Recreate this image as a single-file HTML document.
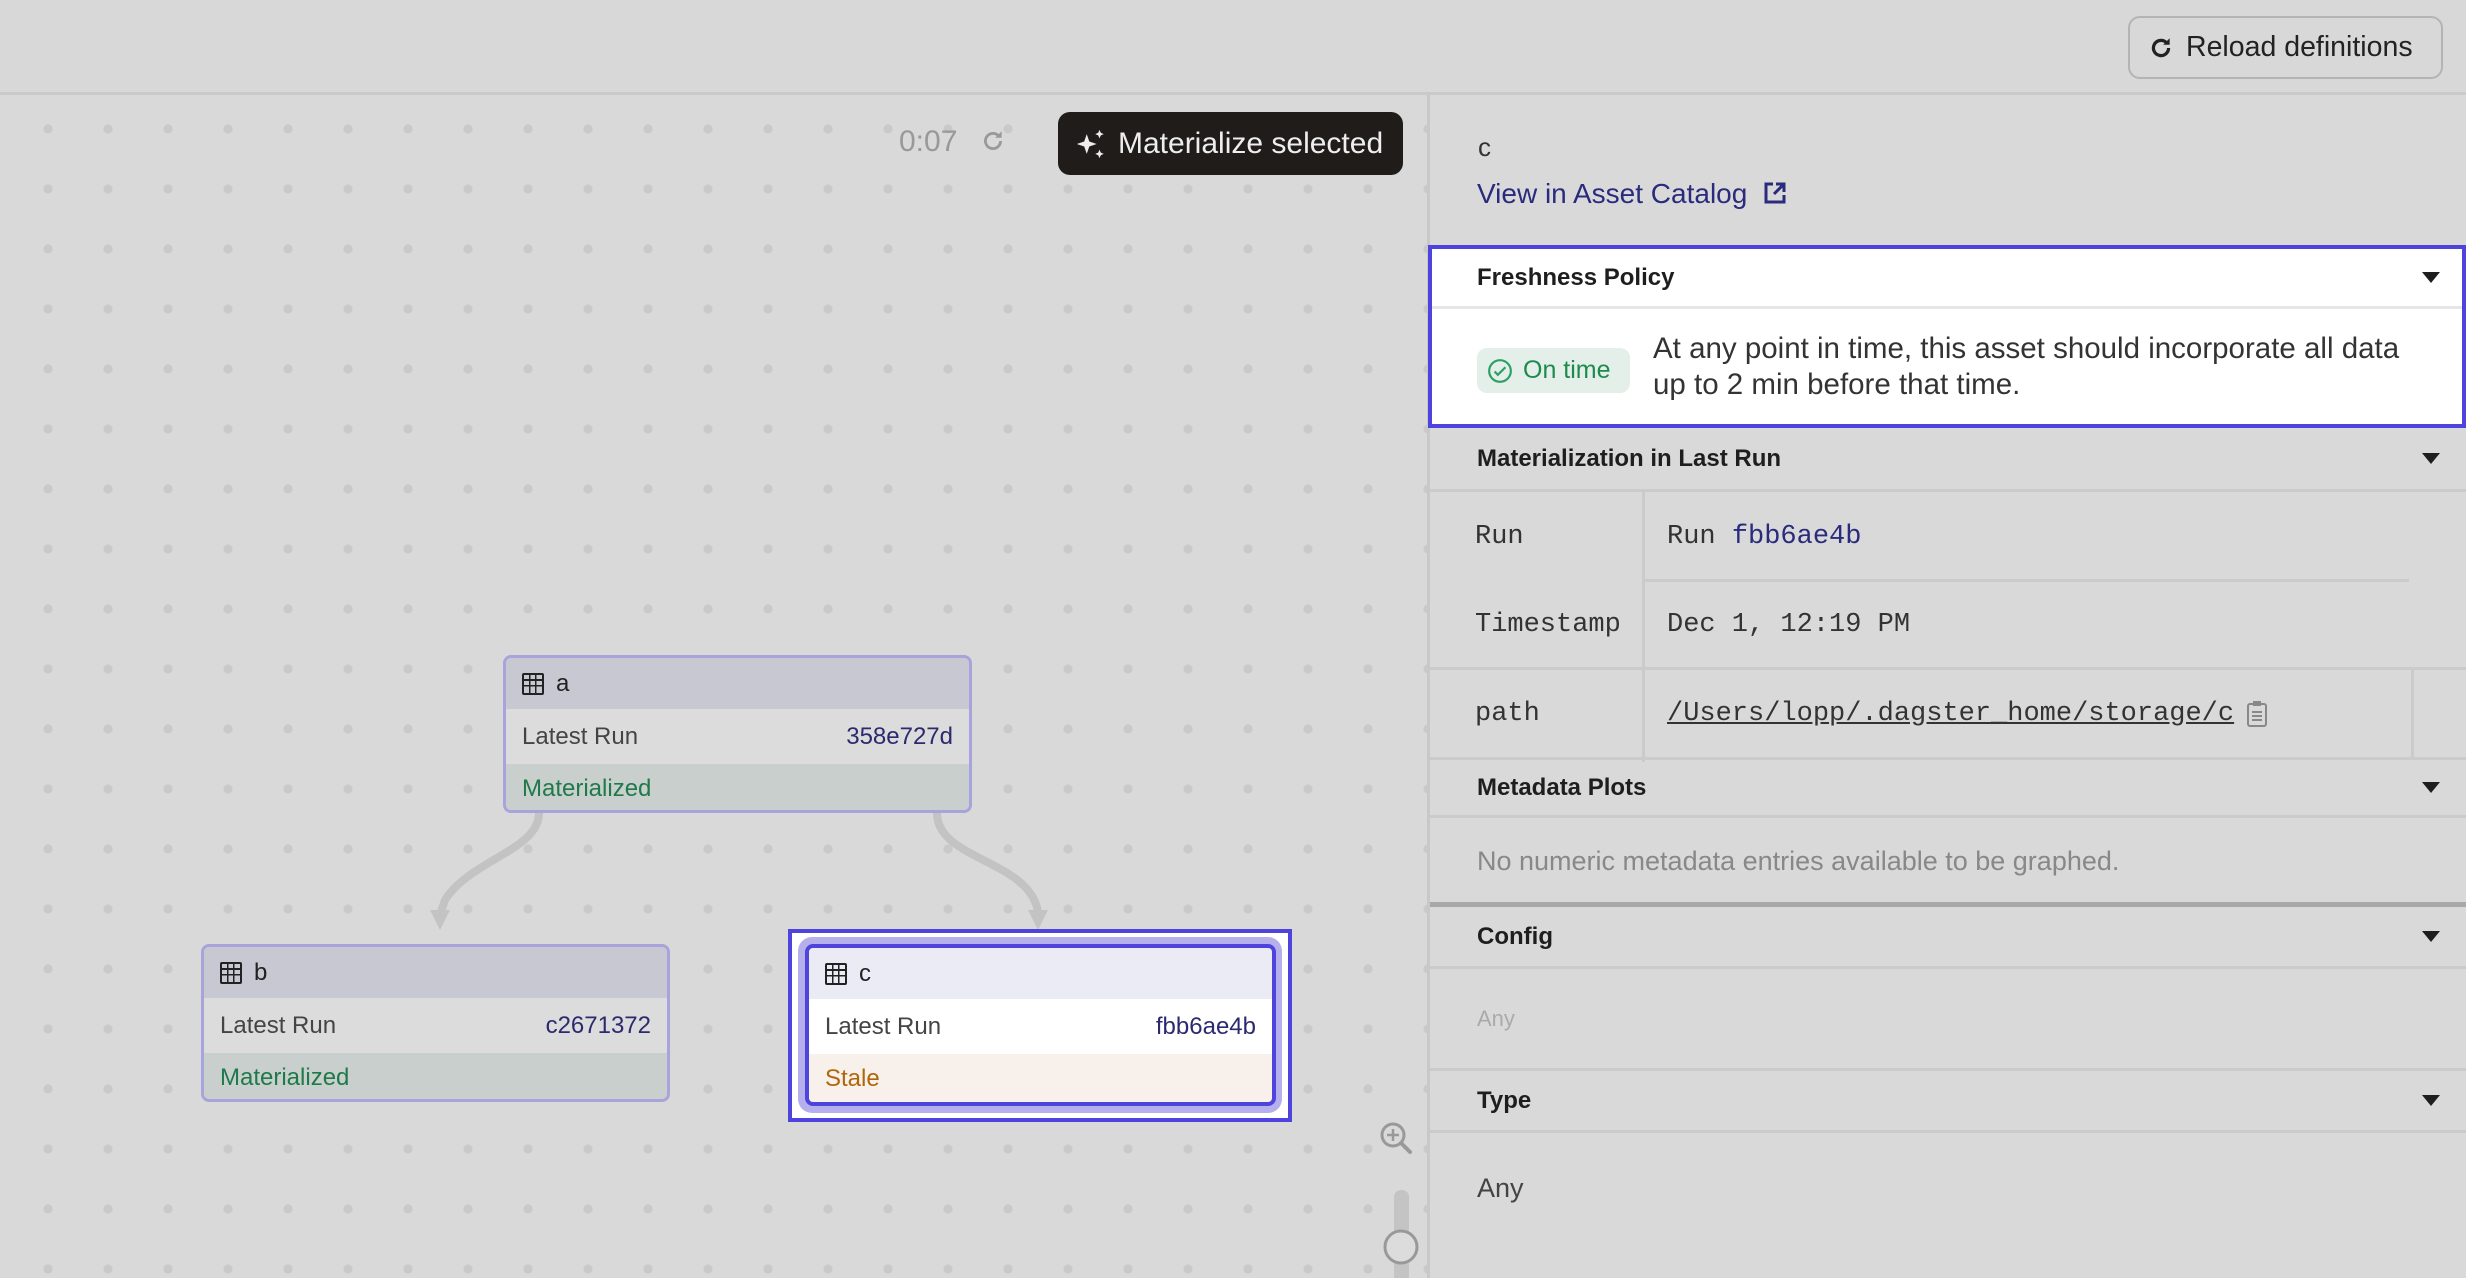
<!DOCTYPE html>
<html><head><meta charset="utf-8"><style>
*{box-sizing:border-box;margin:0;padding:0}
body{width:2466px;height:1278px;overflow:hidden;background:#d9d9d9;font-family:"Liberation Sans",sans-serif;position:relative;color:#222}
.abs{position:absolute}
#top{left:0;top:0;width:2466px;height:95px;background:#d8d8d8;border-bottom:3px solid #cacaca}
#canvas{left:0;top:95px;width:1427px;height:1183px;background-color:#d9d9d9;background-image:radial-gradient(circle,#c9c9c9 4px,transparent 5px);background-size:60px 60px;background-position:18px 4px}
#divider{left:1427px;top:95px;width:3px;height:1183px;background:#c8c8c8}
.node{position:absolute;width:469px;height:158px;border:3px solid #a9a3dc;border-radius:8px;overflow:hidden;font-size:24px}
.node .h{height:51px;background:#c8c8d2;display:flex;align-items:center;padding-left:16px;color:#222}
.node .r{height:55px;background:#dcdcdc;display:flex;align-items:center;justify-content:space-between;padding:0 16px;color:#444}
.node .r span:last-child{color:#2c2a6e}
.node .s{height:50px;background:#c9cfcc;display:flex;align-items:center;padding-left:16px;color:#1f7a4a}
.tbl{display:inline-block;width:22px;height:22px;border:2.5px solid #222;border-radius:2px;margin-right:12px;background:
linear-gradient(#222,#222) 0 4px/100% 2px no-repeat,
linear-gradient(#222,#222) 0 10px/100% 1.5px no-repeat,
linear-gradient(#222,#222) 5px 0/1.5px 100% no-repeat,
linear-gradient(#222,#222) 11px 0/1.5px 100% no-repeat}
.sec{position:absolute;left:1430px;width:1036px;border-bottom:3px solid #cbcbcb;font-weight:bold;font-size:24px;color:#1e1e1e;padding-left:47px;display:flex;align-items:center}
.tri{position:absolute;right:26px;width:0;height:0;border-left:9px solid transparent;border-right:9px solid transparent;border-top:11px solid #1e1e1e}
.mono{font-family:"Liberation Mono",monospace}
.row{position:absolute;left:1430px;width:1036px;display:flex;align-items:center;font-size:27px;color:#333}
</style></head><body>
<div id="top" class="abs"></div>
<div class="abs" style="left:2128px;top:16px;width:315px;height:63px;border:2px solid #b4b4b4;border-radius:12px;display:flex;align-items:center;padding-left:18px;font-size:28.5px;color:#222">
<svg width="26" height="26" viewBox="0 0 24 24" style="margin-right:12px"><path d="M19 12a7 7 0 1 1-2.2-5.1" fill="none" stroke="#222" stroke-width="3"/><path d="M20 3v6h-6z" fill="#222"/></svg>Reload definitions</div>
<div id="canvas" class="abs"></div>
<div id="divider" class="abs"></div>

<div class="abs" style="left:899px;top:125px;font-size:30px;color:#999">0:07</div>
<svg class="abs" style="left:980px;top:128px" width="26" height="26" viewBox="0 0 24 24"><path d="M19 12a7 7 0 1 1-2.2-5.1" fill="none" stroke="#999" stroke-width="2.6"/><path d="M20 3v6h-6z" fill="#999"/></svg>
<div class="abs" style="left:1058px;top:112px;width:345px;height:63px;background:#1f1c1a;border-radius:12px;color:#eee;font-size:30px;display:flex;align-items:center;padding-left:16px">
<svg width="34" height="34" viewBox="0 0 24 24" style="margin-right:10px"><path d="M9 5l1.8 5.2L16 12l-5.2 1.8L9 19l-1.8-5.2L2 12l5.2-1.8z" fill="#eee"/><path d="M18 2l.9 2.1L21 5l-2.1.9L18 8l-.9-2.1L15 5l2.1-.9z" fill="#eee"/><path d="M18 16l.9 2.1L21 19l-2.1.9L18 22l-.9-2.1L15 19l2.1-.9z" fill="#eee"/></svg>Materialize selected</div>

<svg class="abs" style="left:0;top:0" width="1427" height="1278">
<path d="M539 813 C539 850 470 860 445 900 L440 915" fill="none" stroke="#c3c3c3" stroke-width="8"/>
<path d="M430 910 L440 930 L450 910 Z" fill="#c3c3c3"/>
<path d="M937 813 C937 860 1030 860 1038 912" fill="none" stroke="#c3c3c3" stroke-width="8"/>
<path d="M1028 910 L1038 930 L1048 910 Z" fill="#c3c3c3"/>
<circle cx="1393" cy="1135" r="11" fill="none" stroke="#999" stroke-width="3"/>
<path d="M1401 1143 L1410 1152" stroke="#999" stroke-width="4" stroke-linecap="round"/>
<path d="M1393 1129v12M1387 1135h12" stroke="#999" stroke-width="2.5"/>
<rect x="1394" y="1190" width="15" height="100" rx="7" fill="#c4c4c4"/>
<circle cx="1401" cy="1247" r="16" fill="#dcdcdc" stroke="#999" stroke-width="3"/>
</svg>

<div class="node" style="left:503px;top:655px"><div class="h"><i class="tbl"></i>a</div><div class="r"><span>Latest Run</span><span>358e727d</span></div><div class="s">Materialized</div></div>
<div class="node" style="left:201px;top:944px"><div class="h"><i class="tbl"></i>b</div><div class="r"><span>Latest Run</span><span>c2671372</span></div><div class="s">Materialized</div></div>
<div class="abs" style="left:788px;top:929px;width:504px;height:193px;border:4px solid #4f43dd;background:#fff"></div>
<div class="abs" style="left:798px;top:937px;width:484px;height:176px;border-radius:14px;background:#b5b0ec"></div>
<div class="node" style="left:805px;top:944px;height:162px;width:471px;border:4px solid #4f43dd"><div class="h" style="background:#ebebf6">
<i class="tbl"></i>c</div><div class="r" style="background:#fff"><span>Latest Run</span><span>fbb6ae4b</span></div><div class="s" style="background:#f8f0ea;color:#b0660a">Stale</div></div>

<div class="abs" style="left:1478px;top:132px;font-size:26px;color:#333">c</div>
<div class="abs" style="left:1477px;top:178px;font-size:28px;color:#2a2b7c">View in Asset Catalog
<svg width="24" height="24" viewBox="0 0 24 24" style="margin-left:8px;vertical-align:-2px"><path d="M10 3H3v18h18v-7" fill="none" stroke="#2a2b7c" stroke-width="3"/><path d="M13 3h8v8M21 3L11 13" fill="none" stroke="#2a2b7c" stroke-width="3"/></svg></div>

<div class="abs" style="left:1428px;top:245px;width:1038px;height:183px;border:4px solid #4f43dd;background:#fff">
<div style="height:60px;border-bottom:3px solid #e6e6e6;display:flex;align-items:center;padding-left:45px;font-weight:bold;font-size:24px;color:#1e1e1e;position:relative">Freshness Policy<div class="tri" style="right:22px"></div></div>
<div style="position:absolute;left:45px;top:99px;width:153px;height:45px;background:#e3efe8;border-radius:10px;display:flex;align-items:center;padding-left:10px;font-size:25px;color:#1d8a4e">
<svg width="26" height="26" viewBox="0 0 24 24" style="margin-right:10px"><circle cx="12" cy="12" r="10" fill="none" stroke="#2aa065" stroke-width="2"/><path d="M7 12.5l3 3 7-7" fill="none" stroke="#2aa065" stroke-width="2"/></svg>On time</div>
<div style="position:absolute;left:221px;top:82px;font-size:29.5px;line-height:36px;color:#333;white-space:nowrap">At any point in time, this asset should incorporate all data<br>up to 2 min before that time.</div>
</div>

<div class="sec" style="top:428px;height:64px">Materialization in Last Run<div class="tri"></div></div>
<div class="row" style="top:492px;height:90px"><div style="position:absolute;left:212px;top:0;width:3px;height:270px;background:#cbcbcb"></div>
<span class="mono" style="position:absolute;left:45px">Run</span><span class="mono" style="position:absolute;left:237px">Run <span style="color:#2a2b7c">fbb6ae4b</span></span>
<div style="position:absolute;left:215px;bottom:0;width:764px;height:3px;background:#cbcbcb"></div></div>
<div class="row" style="top:582px;height:88px;border-bottom:3px solid #cbcbcb"><span class="mono" style="position:absolute;left:45px">Timestamp</span><span class="mono" style="position:absolute;left:237px">Dec 1, 12:19 PM</span></div>
<div class="row" style="top:670px;height:90px;border-bottom:3px solid #cbcbcb"><span class="mono" style="position:absolute;left:45px">path</span><span class="mono" style="position:absolute;left:237px;text-decoration:underline">/Users/lopp/.dagster_home/storage/c</span>
<svg style="position:absolute;left:815px" width="24" height="28" viewBox="0 0 24 28"><rect x="3" y="4" width="18" height="22" rx="2" fill="none" stroke="#888" stroke-width="2"/><rect x="8" y="1" width="8" height="5" fill="#888"/><path d="M7 12h10M7 16h10M7 20h10" stroke="#888" stroke-width="2"/></svg>
<div style="position:absolute;left:981px;top:0;width:3px;height:90px;background:#cbcbcb"></div></div>

<div class="sec" style="top:760px;height:58px">Metadata Plots<div class="tri"></div></div>
<div class="row" style="top:818px;height:86px;font-size:27px;color:#888"><span style="position:absolute;left:47px">No numeric metadata entries available to be graphed.</span></div>
<div class="abs" style="left:1430px;top:902px;width:1036px;height:5px;background:#a8a8a8"></div>
<div class="sec" style="top:907px;height:62px">Config<div class="tri"></div></div>
<div class="row" style="top:969px;height:102px;font-size:22px;color:#aaa;border-bottom:3px solid #cbcbcb"><span style="position:absolute;left:47px">Any</span></div>
<div class="sec" style="top:1071px;height:62px">Type<div class="tri"></div></div>
<div class="row" style="top:1133px;height:110px;font-size:27px;color:#444"><span style="position:absolute;left:47px">Any</span></div>
</body></html>
